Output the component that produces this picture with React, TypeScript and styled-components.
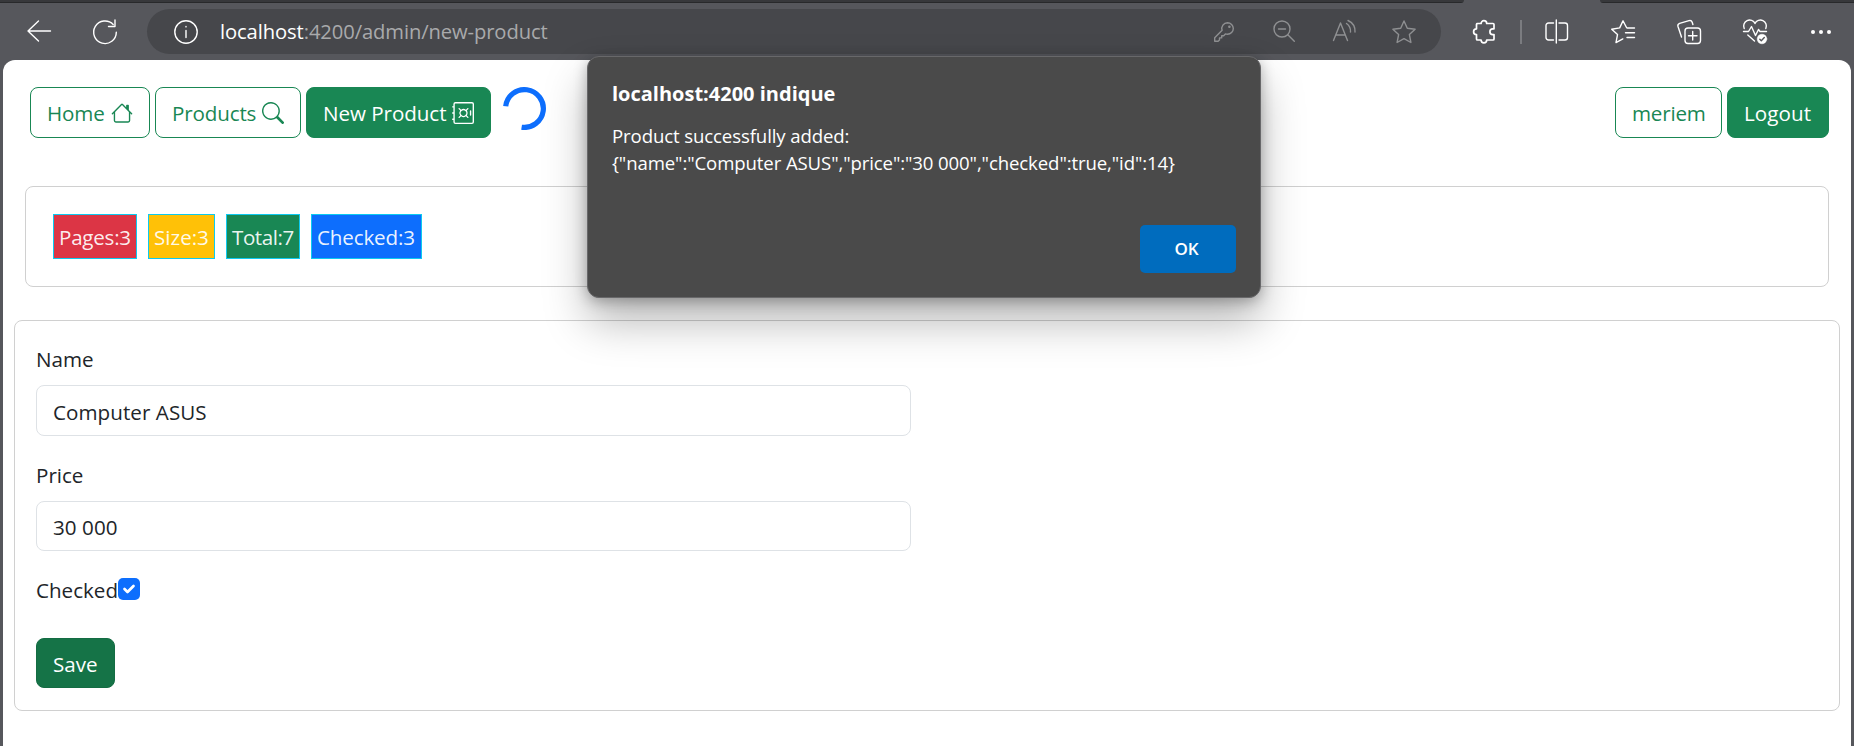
import React from "react";
import styled, { createGlobalStyle, css } from "styled-components";
import { BsHouse, BsSearch, BsSafe } from "react-icons/bs";

const Global = createGlobalStyle`
  * { box-sizing: border-box; }
  html, body { margin: 0; padding: 0; }
  body { background: #56575c; overflow: hidden; font-family: "Open Sans", "Noto Sans", sans-serif; }
  button, input { font-family: inherit; }
`;

const Window = styled.div`
  height: 746px;
  width: 100%;
  display: flex;
  flex-direction: column;
  overflow: hidden;
  position: relative;
  background: #56575c;
`;

const TabStrip = styled.div`
  height: 3px;
  display: flex;
  justify-content: space-between;
`;

const TabEdge = styled.div<{ $w: number; $side: "left" | "right" }>`
  width: ${(p) => p.$w}px;
  background: linear-gradient(#37383b 0 2px, #28292b 2px);
  ${(p) => (p.$side === "left" ? "border-bottom-right-radius: 3px" : "border-bottom-left-radius: 3px")};
`;

const Toolbar = styled.header`
  height: 57px;
  display: flex;
  align-items: center;
  padding: 0 21px 0 27px;
  color: #fff;
`;

const NavIcons = styled.div`
  display: flex;
  gap: 42px;
  width: 120px;
`;

const AddressBar = styled.div`
  flex: 0 0 1294px;
  height: 45px;
  border-radius: 23px;
  background: #46474b;
  display: flex;
  align-items: center;
  padding: 0 25px 0 27px;
`;

const Url = styled.span`
  margin-left: 22px;
  padding-bottom: 2px;
  flex: 1;
  font-size: 20.2px;
  letter-spacing: -0.1px;
  line-height: 28px;
  color: #a9aaac;
  white-space: nowrap;
  b { font-weight: 400; color: #fff; }
`;

const AddressActions = styled.div`
  display: flex;
  gap: 36px;
  color: #8f9092;
`;

const BrowserActions = styled.div`
  display: flex;
  align-items: center;
  margin-left: 31px;
  gap: 42px;
`;

const Divider = styled.i`
  width: 2px;
  height: 24px;
  background: #7b7c80;
  margin: 0 -19px 0 -18px;
`;

const Glyph = styled.svg`
  width: 24px;
  height: 24px;
  flex: none;
  display: block;
  overflow: visible;
  fill: none;
  stroke: currentColor;
  stroke-width: 1.4;
  stroke-linecap: round;
  stroke-linejoin: round;
`;

const Page = styled.main`
  flex: 1;
  margin: 0 3px;
  background: #fff;
  border-radius: 12px 12px 0 0;
  padding: 27px 11px 0;
`;

const Nav = styled.nav`
  display: flex;
  align-items: flex-start;
  height: 51px;
  padding: 0 11px 0 16px;
  gap: 5px;
`;

const Button = styled.button<{ $w: number; $solid?: boolean; $ls?: number }>`
  width: ${(p) => p.$w}px;
  height: 51px;
  padding: 0 0 0 16px;
  display: flex;
  align-items: center;
  border: 1px solid #198754;
  border-radius: 8px;
  font-size: 20.6px;
  white-space: nowrap;
  letter-spacing: ${(p) => p.$ls ?? 0}px;
  color: ${(p) => (p.$solid ? "#fff" : "#198754")};
  background: ${(p) => (p.$solid ? "#198754" : "#fff")};
  svg { width: 22px; height: 22px; margin-left: 6px; flex: none; }
`;

const SaveButton = styled(Button)`
  height: 50px;
  padding-top: 2px;
  background: #157347;
  border-color: #146c43;
`;

const Spinner = styled.svg`
  width: 43px;
  height: 43px;
  margin-left: 7px;
  fill: none;
  stroke: #0d6efd;
  stroke-width: 5.2;
`;

const Spacer = styled.div`
  flex: 1;
`;

const card = css`
  border: 1px solid #d0d0d0;
  border-radius: 8px;
`;

const Stats = styled.section`
  ${card}
  margin: 48px 11px 0;
  height: 101px;
  padding: 27px;
  display: flex;
  gap: 11px;
`;

const Badge = styled.div<{ $bg: string; $w: number; $ls: number }>`
  width: ${(p) => p.$w}px;
  height: 45px;
  padding-left: 5px;
  border: 1px solid #0dcaf0;
  background: ${(p) => p.$bg};
  color: rgba(255, 255, 255, 0.93);
  font-size: 20.6px;
  letter-spacing: ${(p) => p.$ls}px;
  line-height: 45px;
  white-space: nowrap;
`;

const Form = styled.form`
  ${card}
  margin-top: 33px;
  height: 391px;
  padding: 24px 21px 0;
  display: flex;
  flex-direction: column;
  align-items: flex-start;
`;

const Label = styled.label`
  height: 40px;
  line-height: 29px;
  font-size: 20.6px;
  color: #212529;
`;

const Input = styled.input<{ $h: number; $gap: number }>`
  width: 875px;
  height: ${(p) => p.$h}px;
  margin-bottom: ${(p) => p.$gap}px;
  border: 1px solid #dee2e6;
  border-radius: 8px;
  padding: 2px 16px 0;
  font-size: 20.6px;
  letter-spacing: 0.06px;
  color: #212529;
  background: #fff;
`;

const CheckRow = styled.div`
  display: flex;
  height: 63px;
  width: 200px;
`;

const CheckBox = styled.svg`
  width: 22px;
  height: 22px;
  margin-top: 3px;
`;

const CheckLabel = styled(Label)`
  width: 82px;
  line-height: 31px;
  white-space: nowrap;
`;

const Dialog = styled.div`
  position: absolute;
  left: 587px;
  top: 56px;
  width: 674px;
  height: 242px;
  padding: 24px;
  background: #4a4a4a;
  border: 1px solid #68686a;
  border-radius: 12px;
  color: #fff;
  display: flex;
  flex-direction: column;
  box-shadow: 0 24px 44px rgba(0, 0, 0, 0.28), 0 3px 14px rgba(0, 0, 0, 0.28);
`;

const DialogTitle = styled.h1`
  margin: 0 0 15px;
  font-size: 20px;
  line-height: 26px;
  font-weight: 700;
  white-space: nowrap;
`;

const DialogText = styled.p`
  margin: 0;
  font-size: 18.6px;
  line-height: 27px;
  letter-spacing: -0.11px;
  white-space: nowrap;
`;

const OkButton = styled.button`
  margin: auto 0 0 auto;
  width: 96px;
  height: 48px;
  padding: 0 3px 2px 0;
  border: 0;
  border-radius: 5px;
  background: #006cbe;
  color: #fff;
  font-size: 17px;
  font-weight: 600;
`;

export default function App() {
  return (
    <Window>
      <Global />
      <TabStrip>
        <TabEdge $w={1464} $side="left" />
        <TabEdge $w={254} $side="right" />
      </TabStrip>
      <Toolbar>
        <NavIcons>
          <Glyph viewBox="0 0 24 24"><path d="M23.5 11H1M11.5 1 1 11l10.500 10" /></Glyph>
          <Glyph viewBox="0 0 24 24"><path d="M23.300 12.300A11.300 11.300 0 1 1 20.200 4.500M22 0v6.500h-6.500" /></Glyph>
        </NavIcons>
        <AddressBar>
          <Glyph viewBox="0 0 24 24"><circle cx="12" cy="12" r="11.200" /><path d="M12 10.500v7M12 6.500v.4" /></Glyph>
          <Url><b>localhost</b>:4200/admin/new-product</Url>
          <AddressActions>
            <Glyph viewBox="0 0 24 24"><path d="M15.500 2.700a5.800 5.800 0 0 1 0 11.600c-.8 0-1.500-.1-2.100-.4l-1.700 1.800h-2v2.200H7.500V20l-1.400 1.300H2.700v-3.600l7.400-7.400a5.800 5.800 0 0 1 5.400-7.600z" /><circle cx="17.400" cy="6.800" r=".6" /></Glyph>
            <Glyph viewBox="0 0 24 24"><circle cx="10" cy="9" r="8" /><path d="M6.500 9h7M15.800 14.800l6.500 6.500" /></Glyph>
            <Glyph viewBox="0 0 24 24"><path d="M1.500 20.500 8.500 3l7 17.500M4 15h9M14.500 3.500a9.500 9.500 0 0 1 4 8.500M16 .5a12 12 0 0 1 7 11.500" /></Glyph>
            <Glyph viewBox="0 0 24 24"><path d="M12 1l3.300 7.200 7.800 1-5.700 5.400 1.500 7.900L12 18.700 5.100 22.500l1.500-7.900L.9 9.200l7.800-1z" /></Glyph>
          </AddressActions>
        </AddressBar>
        <BrowserActions>
          <Glyph viewBox="0 0 24 24"><path strokeWidth="1.700" d="M5 3.500h4.100a2.800 2.800 0 0 1 5.600 0H21a1 1 0 0 1 1 1v4.300h-1.200a2.900 2.900 0 0 0 0 5.800H22V19a1 1 0 0 1-1 1h-6.300a2.800 2.800 0 0 1-5.600 0H5.500a1 1 0 0 1-1-1v-4.400a2.900 2.900 0 0 1 0-5.800V4.500z" /></Glyph>
          <Divider />
          <Glyph viewBox="0 0 24 24"><path d="M8.500 3H3.500A2.500 2.500 0 0 0 1 5.500v12A2.500 2.500 0 0 0 3.500 20h5M14 3h6a2.500 2.500 0 0 1 2.500 2.500v12A2.500 2.500 0 0 1 20 20h-6M11.300 0v23" /></Glyph>
          <Glyph viewBox="0 0 24 24"><path d="M15.500 7.500 12 .8 8.700 7.900.7 9.200l5.800 5.400-1.500 8 6.800-3.700M16 8h7.500M14.500 12.800h9M16 17.500h7.500" /></Glyph>
          <Glyph viewBox="0 0 24 24"><rect x="8" y="8" width="15.500" height="15.500" rx="3" /><path d="M15.700 11.500v8.500M11.500 15.700H20M4.500 17 1 6.500A2.600 2.600 0 0 1 2.600 3.300L12 .6a2.600 2.600 0 0 1 3.200 1.600l.7 2.300" /></Glyph>
          <Glyph viewBox="0 0 24 24"><path d="M1.200 8.500a5.800 5.800 0 0 1 10.800-5 5.800 5.800 0 0 1 10.800 5M.5 11.500h5L8.500 6.500l4 9 3-6 1.500 2h6.500M4.800 15l6.700 6" /><circle cx="19" cy="19" r="4.800" fill="#fff" stroke="#fff" strokeWidth=".5" /><path d="m16.800 19.200 1.500 1.500 3-3.200" stroke="#56575c" /></Glyph>
          <Glyph viewBox="0 0 24 24"><g fill="currentColor" stroke="none"><circle cx="4" cy="12" r="2" /><circle cx="12" cy="12" r="2" /><circle cx="20" cy="12" r="2" /></g></Glyph>
        </BrowserActions>
      </Toolbar>
      <Page>
        <Nav>
          <Button $w={120} $ls={-0.1}>Home<BsHouse /></Button>
          <Button $w={146} $ls={-0.15}>Products<BsSearch /></Button>
          <Button $w={185} $solid $ls={-0.05}>New Product<BsSafe /></Button>
          <Spinner viewBox="0 0 43 43"><path d="M2.700 19.200A18.900 18.900 0 1 1 18.600 40.200" /></Spinner>
          <Spacer />
          <Button $w={107} $ls={-0.2}>meriem</Button>
          <Button $w={102} $solid $ls={0.1}>Logout</Button>
        </Nav>
        <Stats>
          <Badge $bg="#dc3545" $w={84} $ls={-0.25}>Pages:3</Badge>
          <Badge $bg="#ffc107" $w={67} $ls={0}>Size:3</Badge>
          <Badge $bg="#198754" $w={74} $ls={-0.45}>Total:7</Badge>
          <Badge $bg="#0d6efd" $w={111} $ls={-0.15}>Checked:3</Badge>
        </Stats>
        <Form onSubmit={(e) => e.preventDefault()}>
          <Label>Name</Label>
          <Input $h={51} $gap={25} defaultValue="Computer ASUS" />
          <Label>Price</Label>
          <Input $h={50} $gap={24} defaultValue="30 000" />
          <CheckRow>
            <CheckLabel>Checked</CheckLabel>
            <CheckBox viewBox="0 0 22 22"><rect width="22" height="22" rx="5" fill="#0d6efd" /><path d="m6.500 11 3 3 6-6" fill="none" stroke="#fff" strokeWidth="2.700" strokeLinecap="round" strokeLinejoin="round" /></CheckBox>
          </CheckRow>
          <SaveButton $w={79} $solid>Save</SaveButton>
        </Form>
      </Page>
      <Dialog role="alertdialog">
        <DialogTitle>localhost:4200 indique</DialogTitle>
        <DialogText>Product successfully added:</DialogText>
        <DialogText>{'{"name":"Computer ASUS","price":"30 000","checked":true,"id":14}'}</DialogText>
        <OkButton>OK</OkButton>
      </Dialog>
    </Window>
  );
}
